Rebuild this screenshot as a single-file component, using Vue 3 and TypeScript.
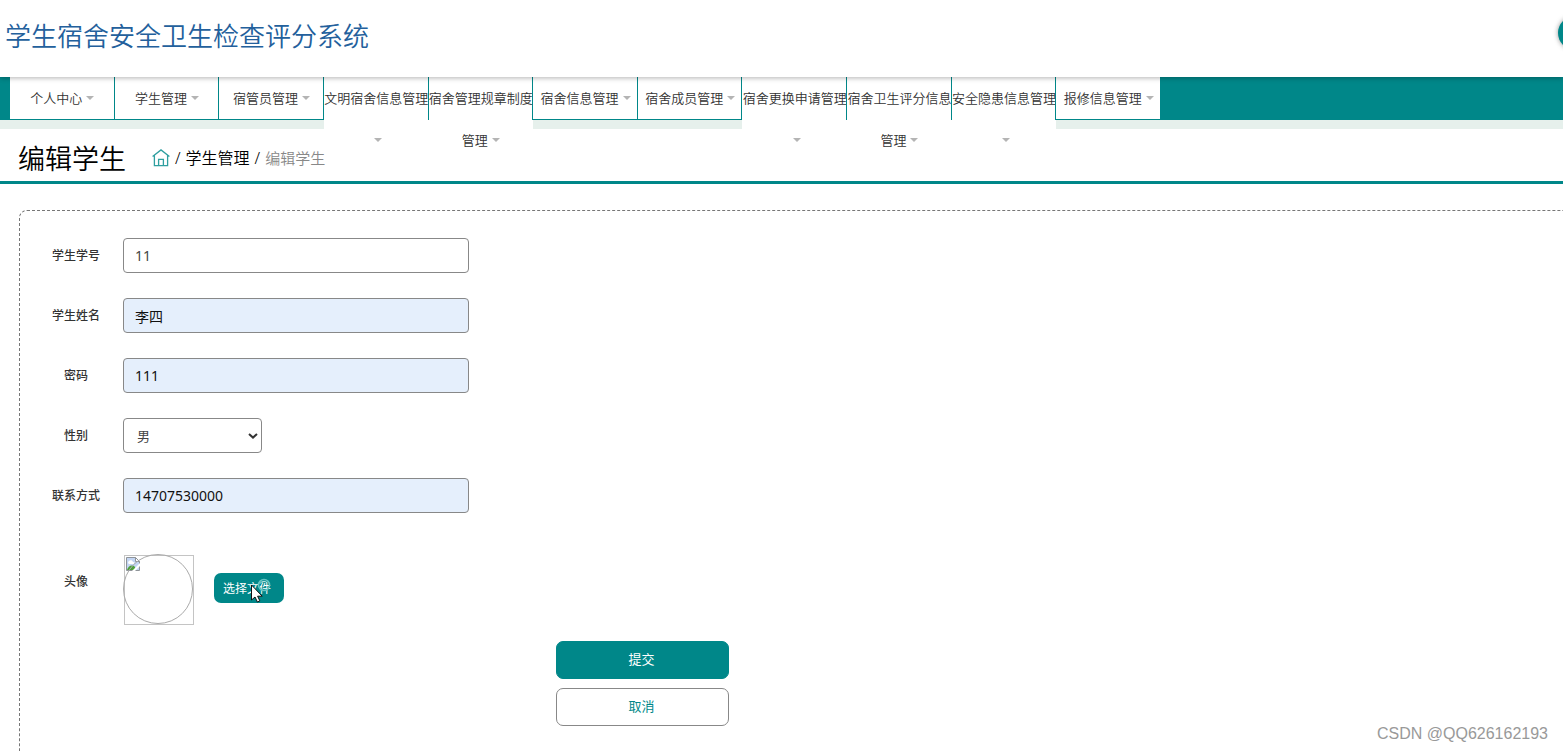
<script setup lang="ts">
import { ref } from 'vue'

interface MenuItem {
  label: string
  tall?: boolean
}

const menu: MenuItem[] = [
  { label: '个人中心' },
  { label: '学生管理' },
  { label: '宿管员管理' },
  { label: '文明宿舍信息管理', tall: true },
  { label: '宿舍管理规章制度管理', tall: true },
  { label: '宿舍信息管理' },
  { label: '宿舍成员管理' },
  { label: '宿舍更换申请管理', tall: true },
  { label: '宿舍卫生评分信息管理', tall: true },
  { label: '安全隐患信息管理', tall: true },
  { label: '报修信息管理' },
]

const studentNo = ref('11')
const studentName = ref('李四')
const password = ref('111')
const gender = ref('男')
const phone = ref('14707530000')
</script>

<template>
  <div class="page">
    <header class="top">
      <h1 class="brand">学生宿舍安全卫生检查评分系统</h1>
      <button class="avatar-button" type="button" aria-label="账户"></button>
    </header>

    <nav class="nav">
      <ul class="menu">
        <li v-for="item in menu" :key="item.label" class="menu-item">
          <a href="#" class="menu-link" :class="{ tall: item.tall }">{{ item.label }}<i class="caret"></i></a>
        </li>
      </ul>
    </nav>

    <div class="heading">
      <h2 class="title">编辑学生</h2>
      <div class="crumbs">
        <a href="#" class="home" aria-label="首页">
          <svg width="18" height="18" viewBox="0 0 18 18" fill="none" stroke="#2f9fa0" stroke-width="1.3">
            <path d="M.6 7.6 9 .9l8.4 6.7M2.4 6.4V16.6h13.2V6.4M6.6 16.4v-6h4.8v6" />
          </svg>
        </a>
        <span>/</span>
        <a href="#" class="crumb">学生管理</a>
        <span>/</span>
        <span class="current">编辑学生</span>
      </div>
    </div>

    <form class="panel" @submit.prevent>
      <div class="fields">
        <div class="row">
          <label for="no">学生学号</label>
          <input id="no" v-model="studentNo" class="control" type="text" />
        </div>
        <div class="row">
          <label for="name">学生姓名</label>
          <input id="name" v-model="studentName" class="control filled" type="text" />
        </div>
        <div class="row">
          <label for="pwd">密码</label>
          <input id="pwd" v-model="password" class="control filled" type="text" />
        </div>
        <div class="row">
          <label for="gender">性别</label>
          <div class="select-box">
            <select id="gender" v-model="gender" class="control select">
              <option>男</option>
              <option>女</option>
            </select>
            <svg class="chevron" width="10" height="6" viewBox="0 0 10 6" fill="none" stroke="#333" stroke-width="2">
              <path d="M1 1l4 3.6L9 1" />
            </svg>
          </div>
        </div>
        <div class="row">
          <label for="phone">联系方式</label>
          <input id="phone" v-model="phone" class="control filled" type="text" />
        </div>
        <div class="row upload">
          <label for="file">头像</label>
          <svg class="photo" width="71" height="71" viewBox="0 0 71 71" fill="none">
            <rect x="1.5" y="1.5" width="69" height="69" stroke="#c4c4c4" />
            <path d="M3.5 3.5h9l4 4v9h-13z" fill="#c3d5f3" stroke="#8f9499" />
            <path d="M12.5 3.5v4h4z" fill="#fff" stroke="#8f9499" />
            <path d="M5 9c0-3 4-4 5-1 2 0 2 2 0 2H6z" fill="#fff" />
            <path d="M4 16c1-4 5-6 8-3l1 3z" fill="#4da03a" />
            <path d="M9 17 17 9v3l-5 5z" fill="#fff" />
            <circle cx="35" cy="35" r="34.5" stroke="#aaa" />
          </svg>
          <div class="file-box">
            <button id="file" class="file" type="button">选择文件</button>
            <svg class="pointer" width="25" height="26" viewBox="0 0 25 26">
              <circle cx="15" cy="7" r="5.5" fill="none" stroke="#64c4c3" stroke-width="1.6" />
              <path d="M11 5.5c1-2 5-3 7-.8" fill="none" stroke="#c5eeee" stroke-width="1" />
              <path d="M2.5 7v15l3.5-3 2.4 5 2.4-1.2-2.2-4.6h4.6z" fill="#fff" stroke="#111" stroke-width="1" />
            </svg>
          </div>
        </div>
        <div class="actions">
          <button class="action submit" type="submit">提交</button>
          <button class="action cancel" type="button">取消</button>
        </div>
      </div>
    </form>

    <div class="watermark">CSDN @QQ626162193</div>
  </div>
</template>

<style>
body {
  margin: 0;
}
</style>

<style scoped>
.page {
  position: relative;
  display: flex;
  flex-direction: column;
  height: 100vh;
  overflow: hidden;
  box-sizing: border-box;
  background: #fff;
  color: #333;
  font-family: 'Noto Sans', 'Noto Sans CJK SC', sans-serif;
  font-size: 13px;
}
.page * {
  box-sizing: border-box;
}
a {
  color: inherit;
  text-decoration: none;
}
button,
input,
select {
  font-family: inherit;
}
.top {
  position: relative;
  z-index: 2;
  flex: none;
  display: flex;
  align-items: center;
  justify-content: space-between;
  height: 77px;
  padding: 0 0 8px 5px;
  box-shadow: 0 1px 5px rgba(0, 0, 0, 0.3);
  background: #fff;
}
.brand {
  margin: 0;
  color: #23609c;
  font-family: 'Noto Sans CJK SC', sans-serif;
  font-size: 26px;
  font-weight: 350;
  line-height: 40px;
}
.avatar-button {
  width: 34px;
  height: 34px;
  margin: 0 -29px 4px 0;
  padding: 0;
  border: 0;
  border-radius: 50%;
  background: #008789;
  box-shadow: 0 0 5px rgba(0, 0, 0, 0.4);
}
.nav {
  position: relative;
  flex: none;
  height: 52px;
  padding-left: 10px;
  border-bottom: 9px solid #e6f0ec;
  background: #008789;
}
.menu {
  display: grid;
  grid-template-columns: repeat(11, 1fr);
  width: 1151px;
  height: 43px;
  margin: 0;
  padding: 0;
  list-style: none;
}
.menu-item {
  position: relative;
  height: 43px;
}
.menu-item::after {
  content: '';
  position: absolute;
  top: 0;
  right: 0;
  width: 1px;
  height: 43px;
  background: #008789;
}
.menu-link {
  display: block;
  height: 42px;
  background: #fff;
  font-weight: 350;
  line-height: 42px;
  text-align: center;
}
.menu-link.tall {
  height: 84px;
}
.caret {
  display: inline-block;
  margin-left: 4px;
  border: 4px solid transparent;
  border-top-color: #b4b4b4;
  border-bottom: 0;
  vertical-align: 3px;
}
.heading {
  position: relative;
  flex: none;
  display: flex;
  align-items: center;
  gap: 26px;
  height: 55px;
  padding: 5px 0 0 18px;
  border-bottom: 3px solid #008789;
  color: #000;
}
.title {
  margin: 0;
  font-family: 'Noto Sans CJK SC', sans-serif;
  font-size: 27px;
  font-weight: 350;
  line-height: 40px;
}
.crumbs {
  display: flex;
  align-items: center;
  gap: 5px;
  font-size: 16px;
  font-weight: 350;
  line-height: 24px;
}
.home {
  display: flex;
}
.current {
  color: #888;
  font-size: 15px;
}
.panel {
  flex: 1 0 auto;
  margin: 26px -20px 0 19px;
  padding: 27px 0 25px 16px;
  border: 1px dashed #777;
  border-bottom: 0;
  border-radius: 8px 0 0 0;
}
.fields {
  display: flex;
  flex-direction: column;
  gap: 25px;
  max-width: 1213px;
}
.row {
  display: flex;
  align-items: center;
  gap: 7px;
}
label {
  width: 80px;
  padding-bottom: 2px;
  font-size: 12px;
  font-weight: 500;
  text-align: center;
}
.control {
  width: 346px;
  height: 35px;
  padding: 0 11px;
  border: 1px solid #888;
  border-radius: 4px;
  outline: 0;
  background: #fff;
  color: #444;
  font-size: 14px;
}
.control.filled {
  background: #e5effc;
  color: #111;
}
.select-box {
  position: relative;
}
.control.select {
  appearance: none;
  width: 139px;
  padding: 0 13px;
  font-size: 13px;
}
.chevron {
  position: absolute;
  top: 15px;
  right: 4px;
}
.upload {
  margin-top: 16px;
}
.upload label {
  padding-bottom: 18px;
}
.file-box {
  position: relative;
  margin: 0 0 3px 13px;
}
.file {
  display: block;
  width: 70px;
  height: 30px;
  padding: 0 4px 1px 0;
  border: 0;
  border-radius: 7px;
  background: #008789;
  color: #fff;
  font-size: 12px;
}
.pointer {
  position: absolute;
  top: 5px;
  left: 35px;
}
.actions {
  display: flex;
  flex-direction: column;
  align-items: center;
  gap: 9px;
  margin-top: -9px;
}
.action {
  width: 173px;
  height: 38px;
  padding: 0 2px 3px 0;
  border: 1px solid #888;
  border-radius: 7px;
  background: #fff;
  color: #008789;
  font-size: 13px;
}
.action.submit {
  border-color: #008789;
  background: #008789;
  color: #fff;
}
.watermark {
  position: absolute;
  right: 15px;
  bottom: 5px;
  color: #999;
  font-family: 'Liberation Sans', sans-serif;
  font-size: 16px;
  line-height: 24px;
}
</style>
